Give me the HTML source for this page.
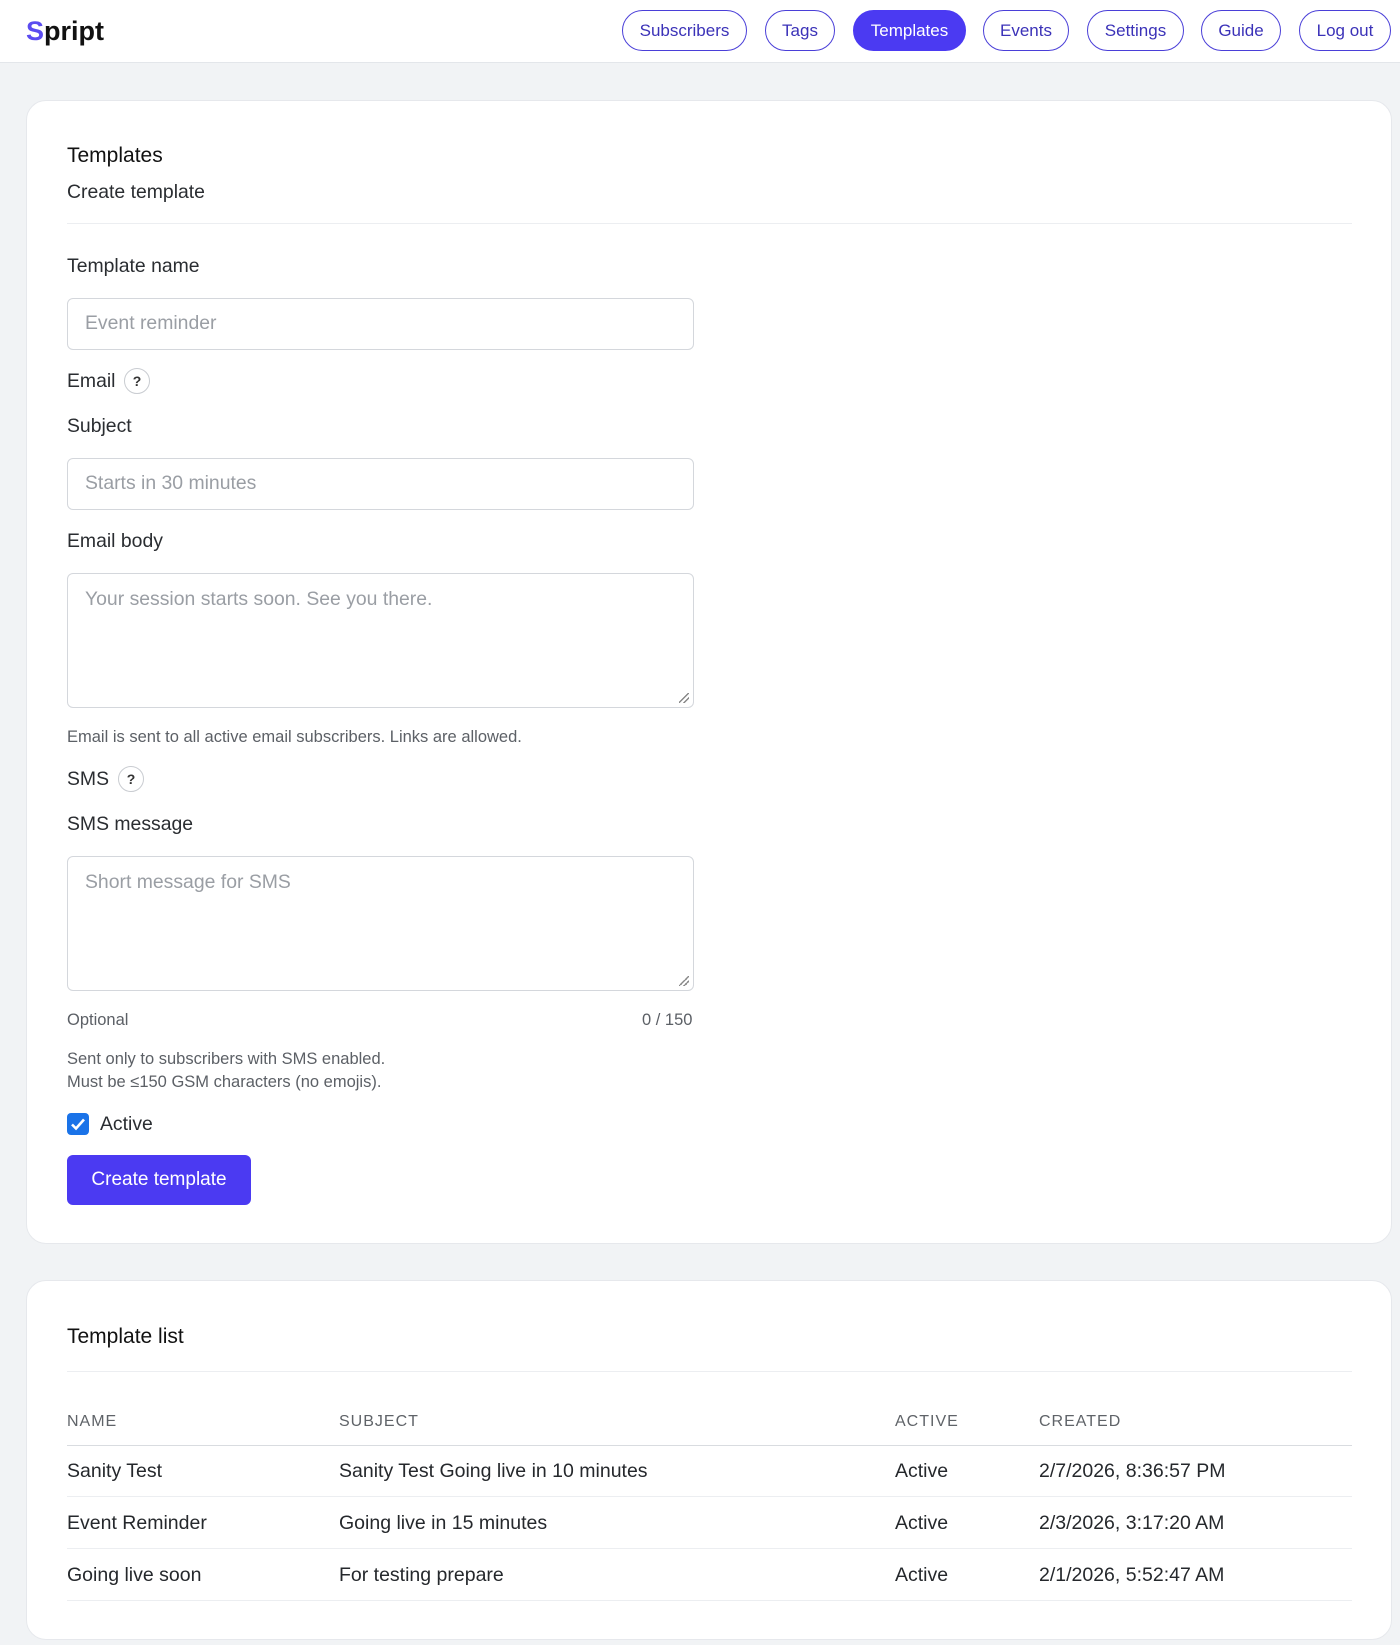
<!DOCTYPE html>
<html><head><meta charset="utf-8"><style>
*{box-sizing:border-box;margin:0;padding:0}
body{width:1400px;height:1645px;background:#f1f3f5;font-family:"Liberation Sans",sans-serif;color:#1f2328;position:relative;overflow:hidden}
.nav{position:absolute;left:0;top:0;width:1400px;height:63px;background:#fff;border-bottom:1px solid #e3e6ea}
.logo{position:absolute;left:26px;top:16px;font-size:27px;font-weight:bold;color:#111}
.logo span{color:#5b4cf0}
.nb{position:absolute;top:10px;height:41px;border:1.5px solid #4a3fd8;border-radius:21px;color:#3b32b8;font-size:17px;display:flex;align-items:center;justify-content:center;background:#fff}
.nb.on{background:#4b3af2;color:#fff;border-color:#4b3af2}
.card{position:absolute;left:26px;width:1366px;background:#fff;border-radius:20px;border:1px solid #e6e8ec}
.a{position:absolute;white-space:nowrap}
.lbl{font-size:19.4px;color:#2a2d31}
.in{position:absolute;left:40px;width:627px;border:1.5px solid #d4d7dc;border-radius:6px;font-size:19.4px;color:#9a9ea4;padding-left:17px}
.hint{font-size:16.5px;color:#5c6066}
.q{position:absolute;width:26px;height:26px;border:1.5px solid #c9ccd1;border-radius:50%;font-size:14px;font-weight:bold;display:flex;align-items:center;justify-content:center;color:#333}
.hr{position:absolute;left:40px;width:1285px;height:1px;background:#eceef1}
.th{font-size:16px;color:#5f6368;letter-spacing:1px}
.td{font-size:19.5px;color:#25282c}
.grip{position:absolute;right:4px;bottom:4px;width:10px;height:10px;background:linear-gradient(135deg,transparent 45%,#888 45%,#888 55%,transparent 55%,transparent 70%,#888 70%,#888 80%,transparent 80%)}
</style></head><body>
<div class="nav">
<div class="logo"><span>S</span>pript</div>
<div class="nb" style="left:622px;width:125px">Subscribers</div>
<div class="nb" style="left:765px;width:70px">Tags</div>
<div class="nb on" style="left:853px;width:113px">Templates</div>
<div class="nb" style="left:983px;width:86px">Events</div>
<div class="nb" style="left:1087px;width:97px">Settings</div>
<div class="nb" style="left:1201px;width:80px">Guide</div>
<div class="nb" style="left:1299px;width:92px">Log out</div>
</div>

<div class="card" style="top:100px;height:1144px">
<div class="a" style="left:40px;top:43px;font-size:21px;color:#111">Templates</div>
<div class="a lbl" style="left:40px;top:80px">Create template</div>
<div class="hr" style="top:122px"></div>
<div class="a lbl" style="left:40px;top:154px">Template name</div>
<div class="in" style="top:197px;height:52px;line-height:49px">Event reminder</div>
<div class="a lbl" style="left:40px;top:269px">Email</div>
<div class="q" style="left:97px;top:267px">?</div>
<div class="a lbl" style="left:40px;top:314px">Subject</div>
<div class="in" style="top:357px;height:52px;line-height:49px">Starts in 30 minutes</div>
<div class="a lbl" style="left:40px;top:429px">Email body</div>
<div class="in" style="top:472px;height:135px;padding-top:14px">Your session starts soon. See you there.<div class="grip"></div></div>
<div class="a hint" style="left:40px;top:627px">Email is sent to all active email subscribers. Links are allowed.</div>
<div class="a lbl" style="left:40px;top:667px">SMS</div>
<div class="q" style="left:91px;top:665px">?</div>
<div class="a lbl" style="left:40px;top:712px">SMS message</div>
<div class="in" style="top:755px;height:135px;padding-top:14px">Short message for SMS<div class="grip"></div></div>
<div class="a hint" style="left:40px;top:910px">Optional</div>
<div class="a hint" style="left:615px;top:910px">0 / 150</div>
<div class="a hint" style="left:40px;top:949px">Sent only to subscribers with SMS enabled.</div>
<div class="a hint" style="left:40px;top:972px">Must be ≤150 GSM characters (no emojis).</div>
<div class="a" style="left:40px;top:1012px;width:22px;height:22px;background:#1a73e8;border-radius:4px"><svg width="22" height="22" viewBox="0 0 22 22"><path d="M5 11.5l4 4 8-9" stroke="#fff" stroke-width="2.6" fill="none"/></svg></div>
<div class="a lbl" style="left:73px;top:1012px">Active</div>
<div class="a" style="left:40px;top:1054px;width:184px;height:50px;background:#4b3af2;border-radius:6px;color:#fff;font-size:19px;display:flex;align-items:center;justify-content:center">Create template</div>
</div>

<div class="card" style="top:1280px;height:360px">
<div class="a" style="left:40px;top:44px;font-size:21px;color:#111">Template list</div>
<div class="hr" style="top:90px"></div>
<div class="a th" style="left:40px;top:132px">NAME</div>
<div class="a th" style="left:312px;top:132px">SUBJECT</div>
<div class="a th" style="left:868px;top:132px">ACTIVE</div>
<div class="a th" style="left:1012px;top:132px">CREATED</div>
<div class="hr" style="top:164px;background:#d9dce0"></div>
<div class="a td" style="left:40px;top:179px">Sanity Test</div>
<div class="a td" style="left:312px;top:179px">Sanity Test Going live in 10 minutes</div>
<div class="a td" style="left:868px;top:179px">Active</div>
<div class="a td" style="left:1012px;top:179px">2/7/2026, 8:36:57 PM</div>
<div class="hr" style="top:215px"></div>
<div class="a td" style="left:40px;top:231px">Event Reminder</div>
<div class="a td" style="left:312px;top:231px">Going live in 15 minutes</div>
<div class="a td" style="left:868px;top:231px">Active</div>
<div class="a td" style="left:1012px;top:231px">2/3/2026, 3:17:20 AM</div>
<div class="hr" style="top:267px"></div>
<div class="a td" style="left:40px;top:283px">Going live soon</div>
<div class="a td" style="left:312px;top:283px">For testing prepare</div>
<div class="a td" style="left:868px;top:283px">Active</div>
<div class="a td" style="left:1012px;top:283px">2/1/2026, 5:52:47 AM</div>
<div class="hr" style="top:319px"></div>
</div>
</body></html>
